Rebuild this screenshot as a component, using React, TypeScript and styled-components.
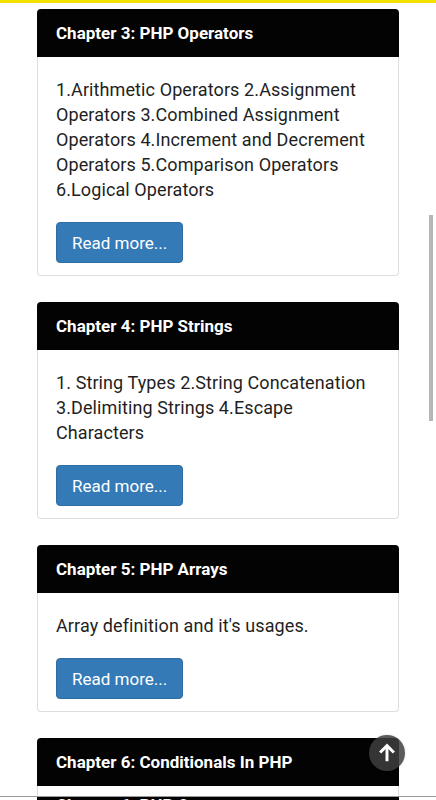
import React from "react";
import styled, { createGlobalStyle } from "styled-components";

const Global = createGlobalStyle`
  html, body { margin: 0; padding: 0; background: #fff; overflow: hidden; }
  body { font-family: Roboto, "Noto Sans", Arial, sans-serif; color: #212121; }
  * { box-sizing: border-box; }
`;

const Page = styled.div`
  position: relative;
  height: 800px;
  overflow: hidden;
  border-top: 3px solid #f2e100;
`;

const List = styled.div`
  display: flex;
  flex-direction: column;
  gap: 26px;
  padding: 6px 37px 0;
`;

const Card = styled.section`
  display: flex;
  flex-direction: column;
`;

const Header = styled.h3`
  margin: 0;
  height: 48px;
  display: flex;
  align-items: center;
  padding: 0 19px;
  background: #030303;
  color: #fff;
  font-size: 17px;
  font-weight: 700;
  border-radius: 4px 4px 0 0;
`;

const Body = styled.div`
  border: 1px solid #dedede;
  border-top: none;
  border-radius: 0 0 4px 4px;
  padding: 20px 18px 12px;
`;

const Text = styled.p`
  margin: 0 0 20px;
  font-size: 18px;
  line-height: 25px;
  letter-spacing: 0.1px;
  color: #1f1f1f;
`;

const Button = styled.a`
  display: inline-flex;
  align-items: center;
  height: 41px;
  padding: 0 15px;
  background: #337ab7;
  border: 1px solid #2e6da4;
  border-radius: 4px;
  color: #fff;
  font-size: 17px;
  text-decoration: none;
`;

const ScrollThumb = styled.div`
  position: absolute;
  right: 3px;
  top: 212px;
  width: 4px;
  height: 206px;
  background: #b7b7b7;
`;

const TopButton = styled.div`
  position: absolute;
  left: 369px;
  top: 732px;
  width: 36px;
  height: 36px;
  border-radius: 50%;
  background: rgba(62, 62, 62, 0.85);
  box-shadow: 0 0 2px rgba(0, 0, 0, 0.2);
  display: flex;
  align-items: center;
  justify-content: center;
`;

const BottomStrip = styled.div`
  position: absolute;
  left: 0;
  right: 0;
  bottom: 0;
  height: 4px;
  border-top: 1px solid #9a9a9a;
  background: #fff;
  overflow: hidden;
  padding: 0 37px;
`;

const StripBar = styled.div`
  height: 30px;
  background: #030303;
  color: #fff;
  font-size: 17px;
  font-weight: 700;
  padding: 0 19px;
  line-height: 17px;
`;

const chapters = [
  {
    title: "Chapter 3: PHP Operators",
    text: "1.Arithmetic Operators 2.Assignment Operators 3.Combined Assignment Operators 4.Increment and Decrement Operators 5.Comparison Operators 6.Logical Operators",
  },
  {
    title: "Chapter 4: PHP Strings",
    text: "1. String Types 2.String Concatenation 3.Delimiting Strings 4.Escape Characters",
  },
  {
    title: "Chapter 5: PHP Arrays",
    text: "Array definition and it's usages.",
  },
  {
    title: "Chapter 6: Conditionals In PHP",
    text: "if, else, elseif and switch statements.",
  },
];

export default function App() {
  return (
    <>
      <Global />
      <Page>
        <List>
          {chapters.map((c) => (
            <Card key={c.title}>
              <Header>{c.title}</Header>
              <Body>
                <Text>{c.text}</Text>
                <Button href="#">Read more...</Button>
              </Body>
            </Card>
          ))}
        </List>
        <ScrollThumb />
        <TopButton>
          <svg width="22" height="22" viewBox="0 0 24 24" fill="none" stroke="#fff" strokeWidth="3.2" strokeLinecap="butt" strokeLinejoin="miter">
            <path d="M12 21V4" />
            <path d="M4.5 11.5L12 4l7.5 7.5" />
          </svg>
        </TopButton>
        <BottomStrip>
          <StripBar>Chapter 6: PHP Operators</StripBar>
        </BottomStrip>
      </Page>
    </>
  );
}
